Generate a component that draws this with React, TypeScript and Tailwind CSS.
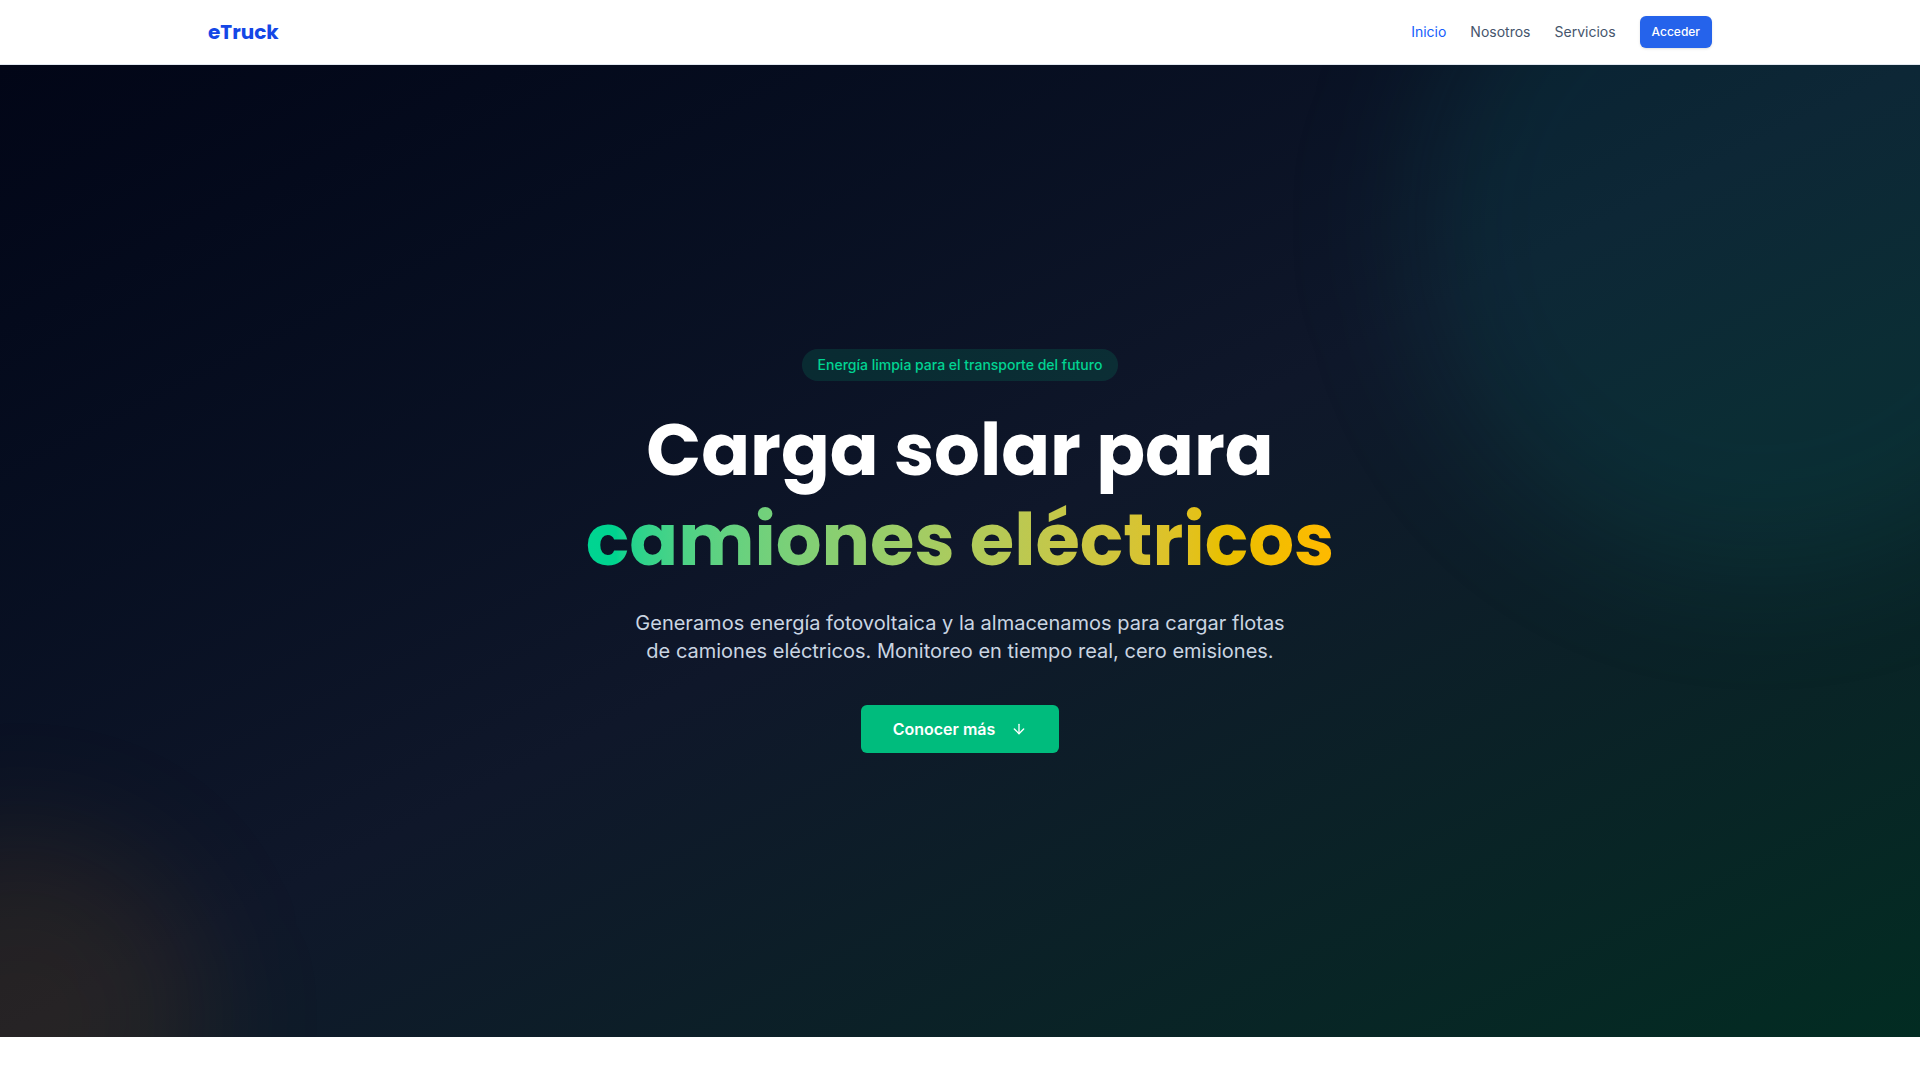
import { ArrowDown } from 'lucide-react';

const display = { fontFamily: '"Poppins", "Open Sans", "Noto Sans", sans-serif' };

function Navbar() {
  return (
    <header className="h-[65px] bg-white border-b border-slate-200">
      <div className="mx-auto flex h-full w-full max-w-[1536px] items-center justify-between px-4">
        <a href="#" className="text-xl font-bold text-blue-700" style={display}>
          eTruck
        </a>
        <nav className="flex items-center gap-6 text-sm">
          <a href="#" className="text-blue-600">Inicio</a>
          <a href="#" className="text-slate-600">Nosotros</a>
          <a href="#" className="text-slate-600">Servicios</a>
          <button className="h-8 rounded-md bg-[#2563eb] px-3 text-xs font-medium text-white shadow-sm">
            Acceder
          </button>
        </nav>
      </div>
    </header>
  );
}

function Hero() {
  return (
    <section className="relative flex min-h-[972px] items-center justify-center overflow-hidden bg-linear-to-br from-[#020617] via-[#0f172a] to-[#022c22]">
      {/* glows */}
      <div className="pointer-events-none absolute -right-48 -top-48 h-[700px] w-[700px] rounded-full bg-teal-500/10 blur-3xl" />
      <div className="pointer-events-none absolute -bottom-40 -left-40 h-[360px] w-[360px] rounded-full bg-amber-500/10 blur-3xl" />

      <div className="relative flex flex-col items-center text-center">
        <span className="rounded-full bg-emerald-500/15 px-4 py-1.5 text-sm font-medium text-emerald-400">
          Energía limpia para el transporte del futuro
        </span>

        <h1 className="mt-6 text-7xl font-bold leading-tight text-white" style={display}>
          Carga solar para
          <br />
          <span className="bg-linear-to-r from-emerald-400 to-amber-400 bg-clip-text text-transparent">
            camiones eléctricos
          </span>
        </h1>

        <p className="mt-6 max-w-2xl text-xl text-slate-300">
          Generamos energía fotovoltaica y la almacenamos para cargar flotas de camiones eléctricos.
          Monitoreo en tiempo real, cero emisiones.
        </p>

        <button className="mt-10 flex h-12 items-center gap-4 rounded-md bg-emerald-500 px-8 text-base font-semibold text-white">
          Conocer más
          <ArrowDown className="h-4 w-4" strokeWidth={2} />
        </button>
      </div>
    </section>
  );
}

export default function App() {
  return (
    <div className="min-h-screen bg-white" style={{ fontFamily: 'Inter, "Noto Sans", sans-serif' }}>
      <Navbar />
      <Hero />
    </div>
  );
}
